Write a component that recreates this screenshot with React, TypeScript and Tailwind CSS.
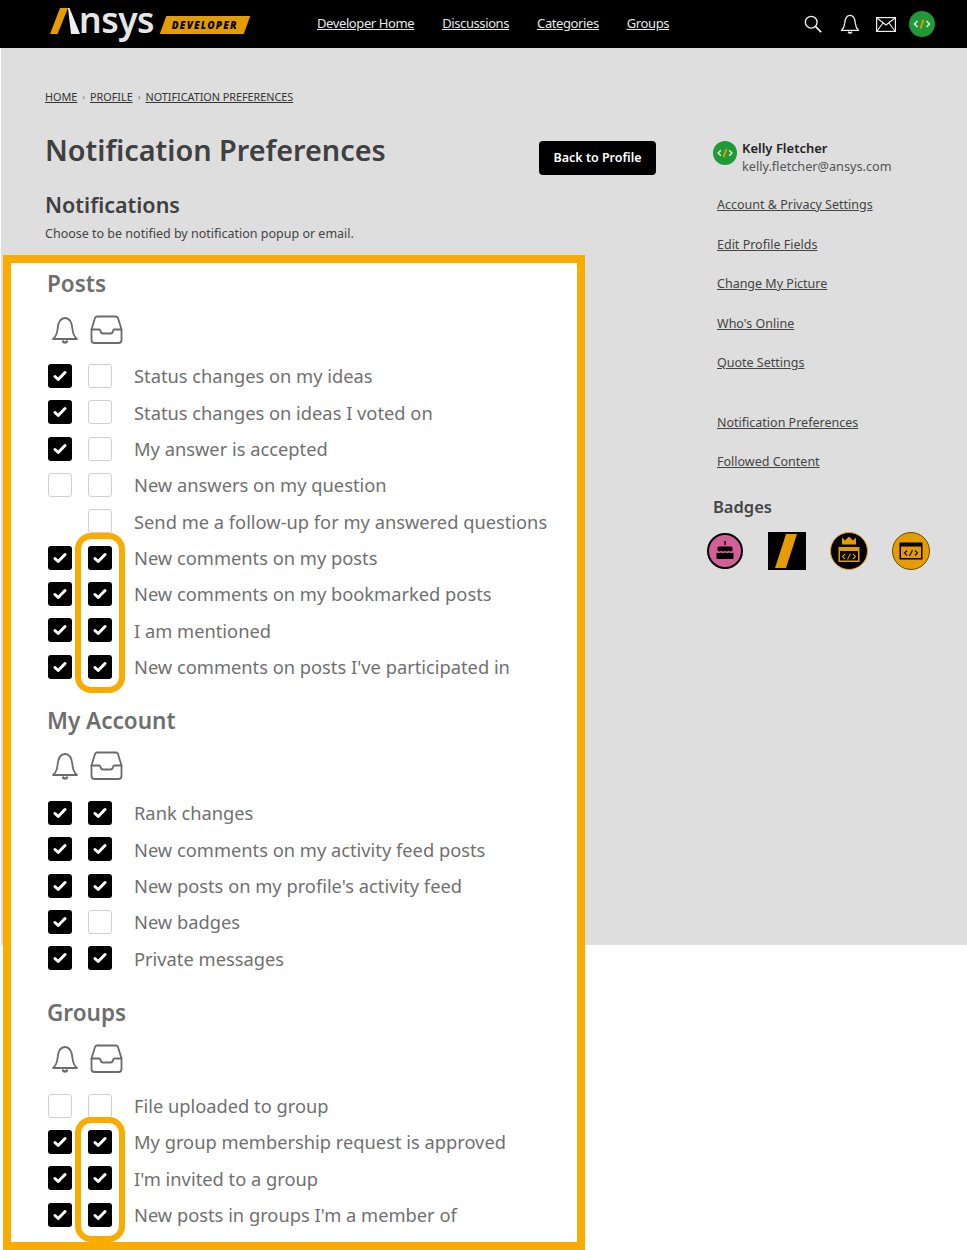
import React from 'react'

type Row = { bell: boolean | null; inbox: boolean; label: string }

const POSTS: Row[] = [
  { bell: true, inbox: false, label: 'Status changes on my ideas' },
  { bell: true, inbox: false, label: 'Status changes on ideas I voted on' },
  { bell: true, inbox: false, label: 'My answer is accepted' },
  { bell: false, inbox: false, label: 'New answers on my question' },
  { bell: null, inbox: false, label: 'Send me a follow-up for my answered questions' },
]

const POSTS_MARKED: Row[] = [
  { bell: true, inbox: true, label: 'New comments on my posts' },
  { bell: true, inbox: true, label: 'New comments on my bookmarked posts' },
  { bell: true, inbox: true, label: 'I am mentioned' },
  { bell: true, inbox: true, label: "New comments on posts I've participated in" },
]

const ACCOUNT: Row[] = [
  { bell: true, inbox: true, label: 'Rank changes' },
  { bell: true, inbox: true, label: 'New comments on my activity feed posts' },
  { bell: true, inbox: true, label: "New posts on my profile's activity feed" },
  { bell: true, inbox: false, label: 'New badges' },
  { bell: true, inbox: true, label: 'Private messages' },
]

const GROUPS: Row[] = [{ bell: false, inbox: false, label: 'File uploaded to group' }]

const GROUPS_MARKED: Row[] = [
  { bell: true, inbox: true, label: 'My group membership request is approved' },
  { bell: true, inbox: true, label: "I'm invited to a group" },
  { bell: true, inbox: true, label: "New posts in groups I'm a member of" },
]

const NAV = ['Developer Home', 'Discussions', 'Categories', 'Groups']

function Check({ on }: { on: boolean }) {
  if (on) {
    return (
      <span className="flex h-6 w-6 items-center justify-center rounded-[3px] bg-black">
        <svg width="14" height="12" viewBox="0 0 14 12">
          <path d="M2 6.500 5.200 9.500 12 2.500" fill="none" stroke="#fff" strokeWidth="3" strokeLinecap="round" strokeLinejoin="round" />
        </svg>
      </span>
    )
  }
  return <span className="h-6 w-6 rounded-[3px] border border-[#d8ccd0] bg-white" />
}

function RowItem({ row }: { row: Row }) {
  return (
    <div className="flex h-[36.33px] items-center">
      <span className="flex w-10">{row.bell !== null && <Check on={row.bell} />}</span>
      <span className="flex w-[46px]">
        <Check on={row.inbox} />
      </span>
      <span className="text-[18.300px] text-[#707070]">{row.label}</span>
    </div>
  )
}

function BellIcon({ size, color, width = 1.4 }: { size: number; color: string; width?: number }) {
  return (
    <svg width={size} height={size} viewBox="0 0 28 28" fill="none" stroke={color} strokeWidth={width} strokeLinejoin="round" strokeLinecap="round">
      <path d="M2 23c3-2.500 4-5 4.500-9.500C7 7 9.500 2 14 2s7 5 7.500 11.500C22 18 23 20.500 26 23Z" />
      <path d="M12 25.500c.5 1.300 3.500 1.300 4 0" strokeWidth={width + 0.6} />
    </svg>
  )
}

function TrayIcon() {
  return (
    <svg width="33" height="30" viewBox="0 0 33 30" fill="none" stroke="#6b6b6b" strokeWidth="1.800" strokeLinejoin="round" strokeLinecap="round">
      <path d="M7 1.500h19c1 0 1.500.6 2 1.500l3.500 11.500V25c0 2-1 3-3 3H4.500c-2 0-3-1-3-3V14.500L5 3c.5-.9 1-1.500 2-1.500Z" />
      <path d="M1.500 14.500h7.500c1 0 1.300.5 1.500 1.500.3 1.500 1 2.500 2.500 2.500h7.500c1.500 0 2.200-1 2.500-2.500.2-1 .5-1.500 1.500-1.500h7" />
    </svg>
  )
}

function Section({ title, className, iconRow }: { title: string; className: string; iconRow: string }) {
  return (
    <div className={className}>
      <h3 className="-ml-px flex h-[42px] items-center text-[22.500px] font-semibold text-[#6e6e6e]">{title}</h3>
      <div className={`flex items-center gap-[11px] pb-[4px] pl-[3px] ${iconRow}`}>
        <BellIcon size={28} color="#6b6b6b" width={1.8} />
        <TrayIcon />
      </div>
    </div>
  )
}

function Avatar({ size }: { size: number }) {
  return (
    <svg width={size} height={size} viewBox="0 0 26 26" className="shrink-0">
      <circle cx="13" cy="13" r="13" fill="#1f9a36" />
      <path d="M8.500 10 5.500 13l3 3M17.500 10l3 3-3 3" fill="none" stroke="#dfe8df" strokeWidth="1.600" />
      <path d="M11.500 17.500 14.500 8.500" fill="none" stroke="#e39a00" strokeWidth="2" />
    </svg>
  )
}

function Logo() {
  return (
    <div className="flex items-center">
      <div className="relative flex h-[48px] w-[104px] items-center">
        <svg width="32" height="28" viewBox="0 0 32 28" className="absolute left-0 top-[7px]">
          <path d="M10 1h8L7.500 27H0Z" fill="#e59c00" />
          <path d="M18 1h1.500L30 27h-9Z" fill="#f0f0f0" />
        </svg>
        <span className="-mt-[8px] ml-[29px] text-[35.500px] font-semibold leading-none tracking-[-0.5px] text-[#e6e6e6]">nsys</span>
      </div>
      <span className="ml-[9px] mt-[2px] flex h-[18px] w-[84px] -skew-x-[20deg] items-center justify-center bg-[#e59c00]">
        <span className="skew-x-[20deg] text-[10px] font-black italic tracking-[1.200px] text-black">DEVELOPER</span>
      </span>
    </div>
  )
}

function WindowGlyph({ x, y, w, h, fg, bg }: { x: number; y: number; w: number; h: number; fg: string; bg: string }) {
  return (
    <g>
      <rect x={x} y={y} width={w} height={h} fill={fg} />
      <rect x={x + 1.500} y={y + 4} width={w - 3} height={h - 5.500} fill={bg} />
      <path
        d={`M${x + w / 2 - 4} ${y + h / 2 - 0.500}l-2.500 2.500 2.500 2.500M${x + w / 2 + 4} ${y + h / 2 - 0.500}l2.500 2.500-2.500 2.500M${x + w / 2 - 1.500} ${y + h / 2 + 5}l3-6`}
        fill="none"
        stroke={fg}
        strokeWidth="1.100"
      />
    </g>
  )
}

function Badges() {
  return (
    <div className="mt-[12px] flex items-center">
      <svg width="38" height="38" viewBox="0 0 38 38" className="-ml-[7px]">
        <circle cx="19" cy="19" r="17" fill="#d25f97" stroke="#000" strokeWidth="2" />
        <path d="M18.300 9h1.400v4h-1.400Z" fill="#000" />
        <path d="M13 14.500h12a1.500 1.500 0 0 1 1.500 1.500v2.500c-1.300 1.200-2.600 1.200-3.700 0-1.200 1.200-2.600 1.200-3.800 0-1.200 1.200-2.600 1.200-3.800 0-1.100 1.200-2.400 1.200-3.700 0V16a1.500 1.500 0 0 1 1.500-1.500Z" fill="#000" />
        <path d="M10.500 20.500c1.300 1 3 1 4.200 0 1.300 1 3 1 4.300 0 1.300 1 3 1 4.300 0 1.200 1 2.900 1 4.200 0v6.500h-17Z" fill="#000" />
      </svg>
      <svg width="38" height="38" viewBox="0 0 38 38" className="ml-[24px]">
        <rect width="38" height="38" fill="#000" />
        <path d="M18 2h11L18 36H7Z" fill="#e59c00" />
      </svg>
      <svg width="38" height="38" viewBox="0 0 38 38" className="ml-[24px]">
        <circle cx="19" cy="19" r="18.500" fill="#000" stroke="#e59c00" strokeWidth="1" />
        <path d="M12 5.500 15 8.500l4-4 4 4 3-3V12.500H12Z" fill="#e59c00" />
        <WindowGlyph x={8.500} y={15} w={21} h={15} fg="#e59c00" bg="#000" />
      </svg>
      <svg width="38" height="38" viewBox="0 0 38 38" className="ml-[24px]">
        <circle cx="19" cy="19" r="18.500" fill="#e59c00" stroke="#6b4a00" strokeWidth="1" />
        <WindowGlyph x={7.500} y={10.500} w={23} h={17} fg="#000" bg="#e59c00" />
      </svg>
    </div>
  )
}

export default function App() {
  return (
    <div className="h-[1250px] overflow-hidden bg-white font-['Noto_Sans',sans-serif] text-[#333]">
      {/* Top bar */}
      <header className="flex h-12 items-center bg-black pl-[50px] pr-[32px]">
        <Logo />
        <nav className="ml-[70px] flex gap-[28px] text-[13px] tracking-[-0.4px] text-[#e8e8e8] underline">
          {NAV.map((n) => (
            <a key={n}>{n}</a>
          ))}
        </nav>
        <div className="ml-auto flex items-center">
          <svg width="18" height="18" viewBox="0 0 20 20" fill="none" stroke="#eee" strokeWidth="1.500">
            <circle cx="8" cy="8" r="6.500" />
            <path d="m13 13 6 6" strokeWidth="2" />
          </svg>
          <span className="ml-[18px] flex">
            <BellIcon size={20} color="#eee" width={1.800} />
          </span>
          <svg width="20" height="15" viewBox="0 0 20 15" fill="none" stroke="#eee" strokeWidth="1.200" className="ml-[16px]">
            <rect x="0.600" y="0.600" width="18.800" height="13.800" />
            <path d="m1 1 9 7 9-7M1 14l6-8M19 14l-6-8" />
          </svg>
          <span className="ml-[13px] flex">
            <Avatar size={26} />
          </span>
        </div>
      </header>

      {/* Gray page */}
      <main className="ml-px flex h-[897px] bg-[#dedede] pl-[44px]">
        <div className="w-[611px] shrink-0">
          <div className="flex h-[59px] items-end pb-[2px]">
            <div className="flex items-center gap-[5px] text-[10.800px] uppercase text-[#333]">
              <a className="underline">Home</a>
              <span className="text-[9px] text-[#777]">›</span>
              <a className="underline">Profile</a>
              <span className="text-[9px] text-[#777]">›</span>
              <a className="underline">Notification Preferences</a>
            </div>
          </div>

          <div className="mt-[21px] flex items-start justify-between">
            <h1 className="text-[28.800px] font-semibold leading-[44px] text-[#404040]">Notification Preferences</h1>
            <button className="mt-[13px] flex h-[34px] w-[117px] items-center justify-center rounded-[4px] bg-black text-[12.500px] font-semibold text-white">
              Back to Profile
            </button>
          </div>
          <h2 className="mt-[13px] text-[21.500px] font-semibold leading-[34px] text-[#404040]">Notifications</h2>
          <p className="mt-[2px] text-[12.500px] leading-[20px] text-[#444]">Choose to be notified by notification popup or email.</p>

          {/* Highlighted settings panel */}
          <div className="-ml-[42px] mt-[11px] h-[995px] w-[582px] border-[8px] border-[#f9ab00] bg-white pl-[37px]">
            <Section title="Posts" className="" iconRow="h-[53px]" />
            {POSTS.map((r) => (
              <RowItem key={r.label} row={r} />
            ))}
            <div className="relative">
              {POSTS_MARKED.map((r) => (
                <RowItem key={r.label} row={r} />
              ))}
              <span className="absolute -bottom-[8px] -top-[7px] left-[27px] w-[50px] rounded-[16px] border-[6px] border-[#f9ab00]" />
            </div>

            <Section title="My Account" className="mt-[15px]" iconRow="h-[53px]" />
            {ACCOUNT.map((r) => (
              <RowItem key={r.label} row={r} />
            ))}

            <Section title="Groups" className="mt-[15px]" iconRow="h-[54px]" />
            {GROUPS.map((r) => (
              <RowItem key={r.label} row={r} />
            ))}
            <div className="relative">
              {GROUPS_MARKED.map((r) => (
                <RowItem key={r.label} row={r} />
              ))}
              <span className="absolute -bottom-[9px] -top-[7px] left-[27px] w-[50px] rounded-[16px] border-[6px] border-[#f9ab00]" />
            </div>
          </div>
        </div>

        {/* Sidebar */}
        <aside className="ml-[57px] w-[240px] pt-[91px]">
          <div className="flex items-start gap-[5px]">
            <span className="mt-[2px] flex">
              <Avatar size={24} />
            </span>
            <div>
              <div className="text-[13px] font-semibold leading-[18px] text-[#222]">Kelly Fletcher</div>
              <div className="text-[12.700px] leading-[18px] text-[#555]">kelly.fletcher@ansys.com</div>
            </div>
          </div>
          <ul className="ml-[4px] mt-[10px] text-[12.500px] text-[#444] underline">
            <li className="h-[40px] leading-[40px]">Account &amp; Privacy Settings</li>
            <li className="h-[39px] leading-[39px]">Edit Profile Fields</li>
            <li className="h-[40px] leading-[39px]">Change My Picture</li>
            <li className="h-[39px] leading-[39px]">Who's Online</li>
            <li className="h-[60px] leading-[39px]">Quote Settings</li>
            <li className="h-[39px] leading-[39px]">Notification Preferences</li>
            <li className="h-[39px] leading-[39px]">Followed Content</li>
          </ul>
          <h4 className="mt-[13px] text-[16.500px] font-semibold leading-[26px] text-[#444]">Badges</h4>
          <Badges />
        </aside>
      </main>
    </div>
  )
}
